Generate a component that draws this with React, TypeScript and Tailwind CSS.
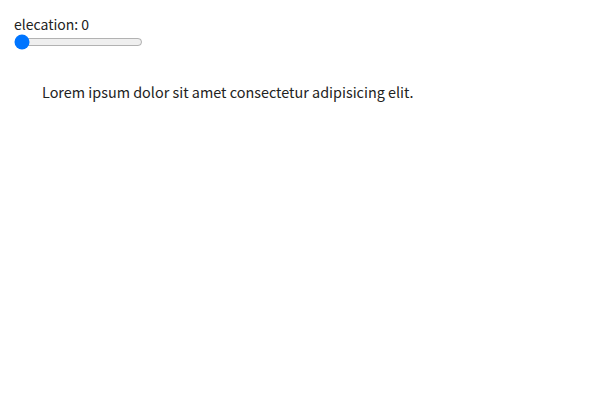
import { useState } from "react";

export default function App() {
  const [elevation, setElevation] = useState(0);

  return (
    <div className="min-h-screen bg-white p-[14px] text-[14px] text-[#222] [font-family:'Noto_Sans_CJK_SC','Noto_Sans',sans-serif]">
      <div className="flex flex-col items-start">
        <label className="leading-[20px]">elecation: {elevation}</label>
        <input
          type="range"
          min={0}
          max={24}
          value={elevation}
          onChange={(e) => setElevation(Number(e.target.value))}
          className="m-0 w-[129px]"
        />
      </div>

      {/* Card */}
      <div className="mt-[20px] px-[28px] py-[12px]">
        <p className="text-[14.4px] leading-[20px]">
          Lorem ipsum dolor sit amet consectetur adipisicing elit.
        </p>
      </div>
    </div>
  );
}
